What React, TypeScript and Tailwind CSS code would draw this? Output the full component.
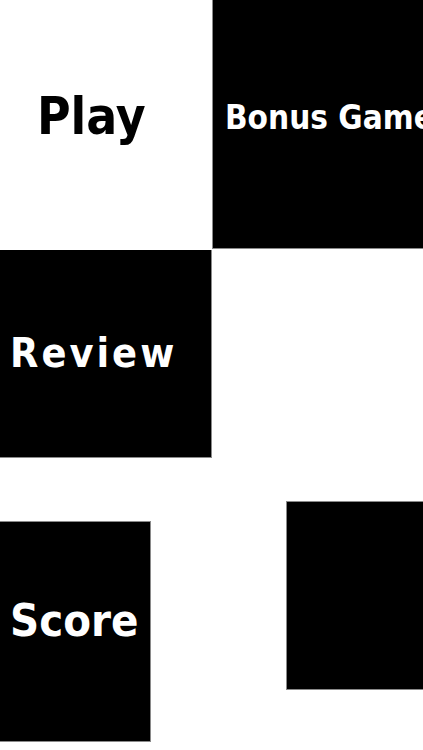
import React from "react";

const font = { fontFamily: '"DejaVu Sans Condensed", "DejaVu Sans", sans-serif' };

export default function App() {
  return (
    <div className="w-[423px] h-[750px] bg-white overflow-hidden flex flex-col" style={font}>
      <div className="flex h-[249px]">
        <div className="w-[212px] pl-[37px] pt-[91px]">
          <div className="text-[51px] leading-none font-bold text-black">Play</div>
        </div>
        <div className="flex-1 bg-black border-l border-b border-[#8a8a8a] pl-[12px] pt-[101px] overflow-hidden">
          <div className="text-[33px] leading-none font-bold text-white whitespace-nowrap">Bonus Game</div>
        </div>
      </div>
      <div className="mt-[1px] w-[212px] h-[208px] bg-black border-r border-b border-[#8a8a8a] pl-[10px] pt-[83px]">
        <div className="text-[41px] leading-none font-bold text-white tracking-[3px]">Review</div>
      </div>
      <div className="flex items-start">
        <div className="mt-[63px] w-[151px] h-[221px] bg-black border-r border-b border-t border-[#8a8a8a] pl-[10px] pt-[76px]">
          <div className="text-[45px] leading-none font-bold text-white">Score</div>
        </div>
        <div className="mt-[43px] ml-[135px] w-[137px] h-[189px] bg-black border-l border-t border-b border-[#8a8a8a]" />
      </div>
    </div>
  );
}
